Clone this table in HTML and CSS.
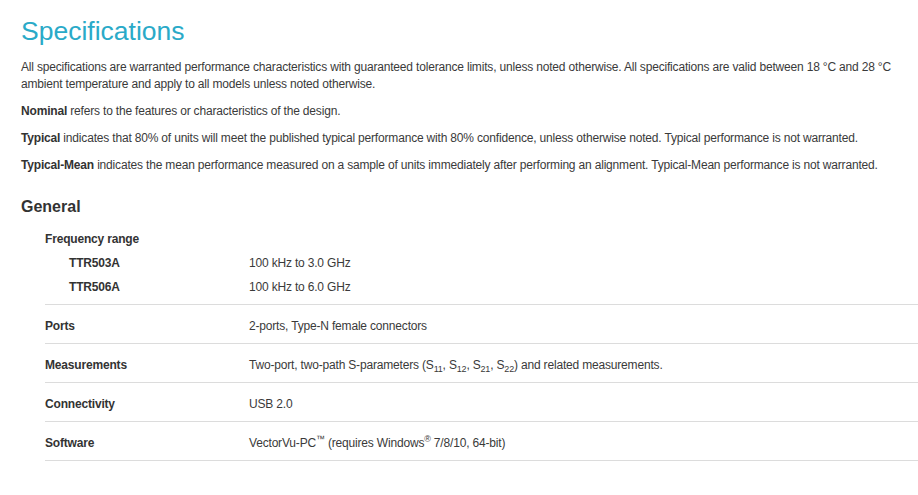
FILE: index.html
```html
<html>

<head>
    <title>Specifications</title>
    <link rel="stylesheet" href="styles.css">
</head>

<body>
    <main class="specs">
        <h1 class="specs-title">Specifications</h1>
        <div class="intro">
            <p>All specifications are warranted performance characteristics with guaranteed tolerance limits, unless noted otherwise. All specifications are valid between 18 °C and 28 °C ambient temperature and apply to all models unless noted otherwise.</p>
            <p><b>Nominal</b> refers to the features or characteristics of the design.</p>
            <p><b>Typical</b> indicates that 80% of units will meet the published typical performance with 80% confidence, unless otherwise noted. Typical performance is not warranted.</p>
            <p><b>Typical-Mean</b> indicates the mean performance measured on a sample of units immediately after performing an alignment. Typical-Mean performance is not warranted.</p>
        </div>

        <h2 class="group-title">General</h2>
        <div class="spec-table">
            <div class="spec-row">
                <div class="spec-label">Frequency range</div>
                <div class="spec-value"></div>
                <div class="spec-label sub">TTR503A</div>
                <div class="spec-value">100 kHz to 3.0 GHz</div>
                <div class="spec-label sub">TTR506A</div>
                <div class="spec-value">100 kHz to 6.0 GHz</div>
            </div>
            <div class="spec-row">
                <div class="spec-label">Ports</div>
                <div class="spec-value">2-ports, Type-N female connectors</div>
            </div>
            <div class="spec-row">
                <div class="spec-label">Measurements</div>
                <div class="spec-value">Two-port, two-path S-parameters (S<sub>11</sub>, S<sub>12</sub>, S<sub>21</sub>, S<sub>22</sub>) and related measurements.</div>
            </div>
            <div class="spec-row">
                <div class="spec-label">Connectivity</div>
                <div class="spec-value">USB 2.0</div>
            </div>
            <div class="spec-row">
                <div class="spec-label">Software</div>
                <div class="spec-value">VectorVu-PC<sup>™</sup> (requires Windows<sup>®</sup> 7/8/10, 64-bit)</div>
            </div>
        </div>
    </main>
</body>

</html>
```
FILE: styles.css
```css
body {
    margin: 0;
    background: #fff;
    color: #3a3a3a;
    font-family: "Liberation Sans", Arial, sans-serif;
    font-size: 12px;
    letter-spacing: -0.18px;
}

.specs {
    padding-left: 21px;
}

.specs-title {
    margin: 15px 0 0 0;
    font-size: 26.5px;
    line-height: 32px;
    font-weight: normal;
    letter-spacing: 0;
    color: #2aaac8;
}

.intro {
    margin-top: 12px;
    padding-right: 18px;
}

.intro p {
    margin: 0 0 10px 0;
    line-height: 17px;
}

.intro b {
    color: #333;
}

.group-title {
    margin: 23px 0 0 0;
    font-size: 16px;
    line-height: 20px;
    letter-spacing: 0;
    color: #333;
}

.spec-table {
    margin-top: 3px;
    margin-left: 24px;
}

.spec-row {
    display: grid;
    grid-template-columns: 204px 1fr;
    padding: 9px 0 5px 0;
    border-bottom: 1px solid #dcdcdc;
    line-height: 24px;
}

.spec-row:first-child {
    padding: 7px 0 5px 0;
}

.spec-label {
    font-weight: bold;
    color: #333;
}

.spec-label.sub {
    padding-left: 24px;
}

sub, sup {
    font-size: 9px;
    line-height: 0;
}
```
